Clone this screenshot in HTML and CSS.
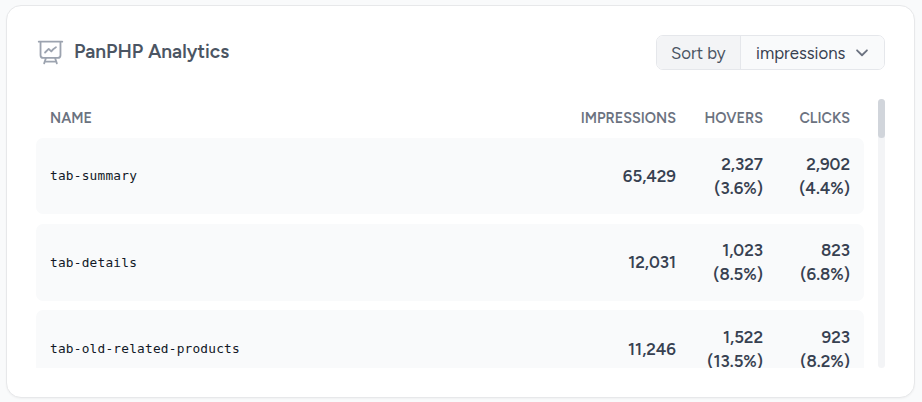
FILE: index.html
```html
<!DOCTYPE html>
<html lang="en">
<head>
<meta charset="utf-8">
<title>PanPHP Analytics</title>
<link rel="stylesheet" href="styles.css">
</head>
<body>
<section class="card">
  <header class="card-header">
    <svg class="icon" viewBox="0 0 24 24" fill="none" stroke="currentColor" stroke-width="1.5" stroke-linecap="round" stroke-linejoin="round"><path d="M3.75 3v11.25A2.25 2.25 0 0 0 6 16.5h2.25M3.75 3h-1.5m1.5 0h16.5m0 0h1.5m-1.5 0v11.25A2.25 2.25 0 0 1 18 16.5h-2.25m-7.5 0h7.5m-7.5 0-1 3m8.5-3 1 3m0 0 .5 1.5m-.5-1.5h-9.5m0 0-.5 1.5m.75-9 3-3 2.148 2.148A12.061 12.061 0 0 1 16.5 7.605"/></svg>
    <h2 class="title">PanPHP Analytics</h2>
    <div class="sort">
      <span class="sort-label"><span class="sort-text">Sort by</span></span>
      <span class="sort-value"><span class="sort-option">impressions</span>
        <svg class="chevron" viewBox="0 0 20 20" fill="none" stroke="currentColor" stroke-width="2" stroke-linecap="round" stroke-linejoin="round"><path d="m4.5 7 5.5 5.5 5.5-5.5"/></svg>
      </span>
    </div>
  </header>
  <div class="scroll">
    <div class="table">
      <div class="row head"><span>NAME</span><span class="h-imp">IMPRESSIONS</span><span class="h-hov">HOVERS</span><span>CLICKS</span></div>
      <div class="row item"><code>tab-summary</code><span>65,429</span><span>2,327<br>(3.6%)</span><span>2,902<br>(4.4%)</span></div>
      <div class="row item"><code>tab-details</code><span>12,031</span><span>1,023<br>(8.5%)</span><span>823<br>(6.8%)</span></div>
      <div class="row item"><code>tab-old-related-products</code><span>11,246</span><span>1,522<br>(13.5%)</span><span>923<br>(8.2%)</span></div>
    </div>
    <div class="track"><div class="thumb"></div></div>
  </div>
</section>
</body>
</html>
```
FILE: styles.css
```css
* { box-sizing: border-box; }
body {
  margin: 0;
  height: 402px;
  overflow: hidden;
  padding: 5px 7px 4px 6px;
  background: #f9fafb;
  font-family: Figtree, Lato, sans-serif;
  color: #374151;
}
.card {
  height: 393px;
  padding: 29px 29px 0;
  background: #fff;
  border: 1px solid #e7e8ea;
  border-radius: 15px;
  box-shadow: 0 1px 2px rgba(0, 0, 0, .04);
}
.card-header { display: flex; align-items: center; height: 35px; }
.icon { width: 29px; height: 29px; color: #9ca3af; margin-top: -1px; }
.title {
  margin: -2px 0 0 9px;
  font-size: 19.2px;
  font-weight: 600;
  line-height: 28px;
  color: #4b5563;
}
.sort {
  display: flex;
  width: 229px;
  height: 35px;
  margin-left: auto;
  border: 1px solid #e5e7eb;
  border-radius: 7px;
  overflow: hidden;
  font-size: 16.8px;
  line-height: 35px;
}
.sort-label {
  width: 84px;
  padding-left: 14px;
  background: #f3f4f6;
  border-right: 1px solid #e5e7eb;
  color: #4b5563;
}
.sort-value { flex: 1; display: flex; align-items: center; padding-left: 15px; background: #f9fafb; }
.sort-option { padding-top: 1px; }
.chevron { width: 18px; height: 18px; margin-left: auto; margin-right: 13px; color: #6b7280; }
.scroll { display: flex; justify-content: space-between; height: 270px; margin-top: 28px; }
.table { width: 828px; height: 270px; overflow: hidden; }
.row {
  display: grid;
  grid-template-columns: 1fr 110px 87px 87px;
  align-items: center;
  padding: 0 14px;
  text-align: right;
}
.row > :first-child { text-align: left; }
.head { height: 40px; font-size: 14.4px; font-weight: 600; color: #6b7280; }
.item {
  height: 76.4px;
  margin-bottom: 9.8px;
  border-radius: 7px;
  background: #f9fafb;
  font-size: 16.8px;
  font-weight: 600;
  line-height: 24px;
}
.item + .item { padding-bottom: 1px; }
.item + .item code { padding-top: 2px; }
.item:last-child, .item:last-child code { padding-top: 0; padding-bottom: 0; }
code {
  font: 400 12.8px/18px "DejaVu Sans Mono", monospace;
  letter-spacing: .21px;
  color: #111827;
}
.track { width: 7px; height: 269px; margin-top: 1px; border-radius: 4px; background: #f3f4f6; }
.thumb { height: 39px; border-radius: 4px; background: #d1d5db; }
```
